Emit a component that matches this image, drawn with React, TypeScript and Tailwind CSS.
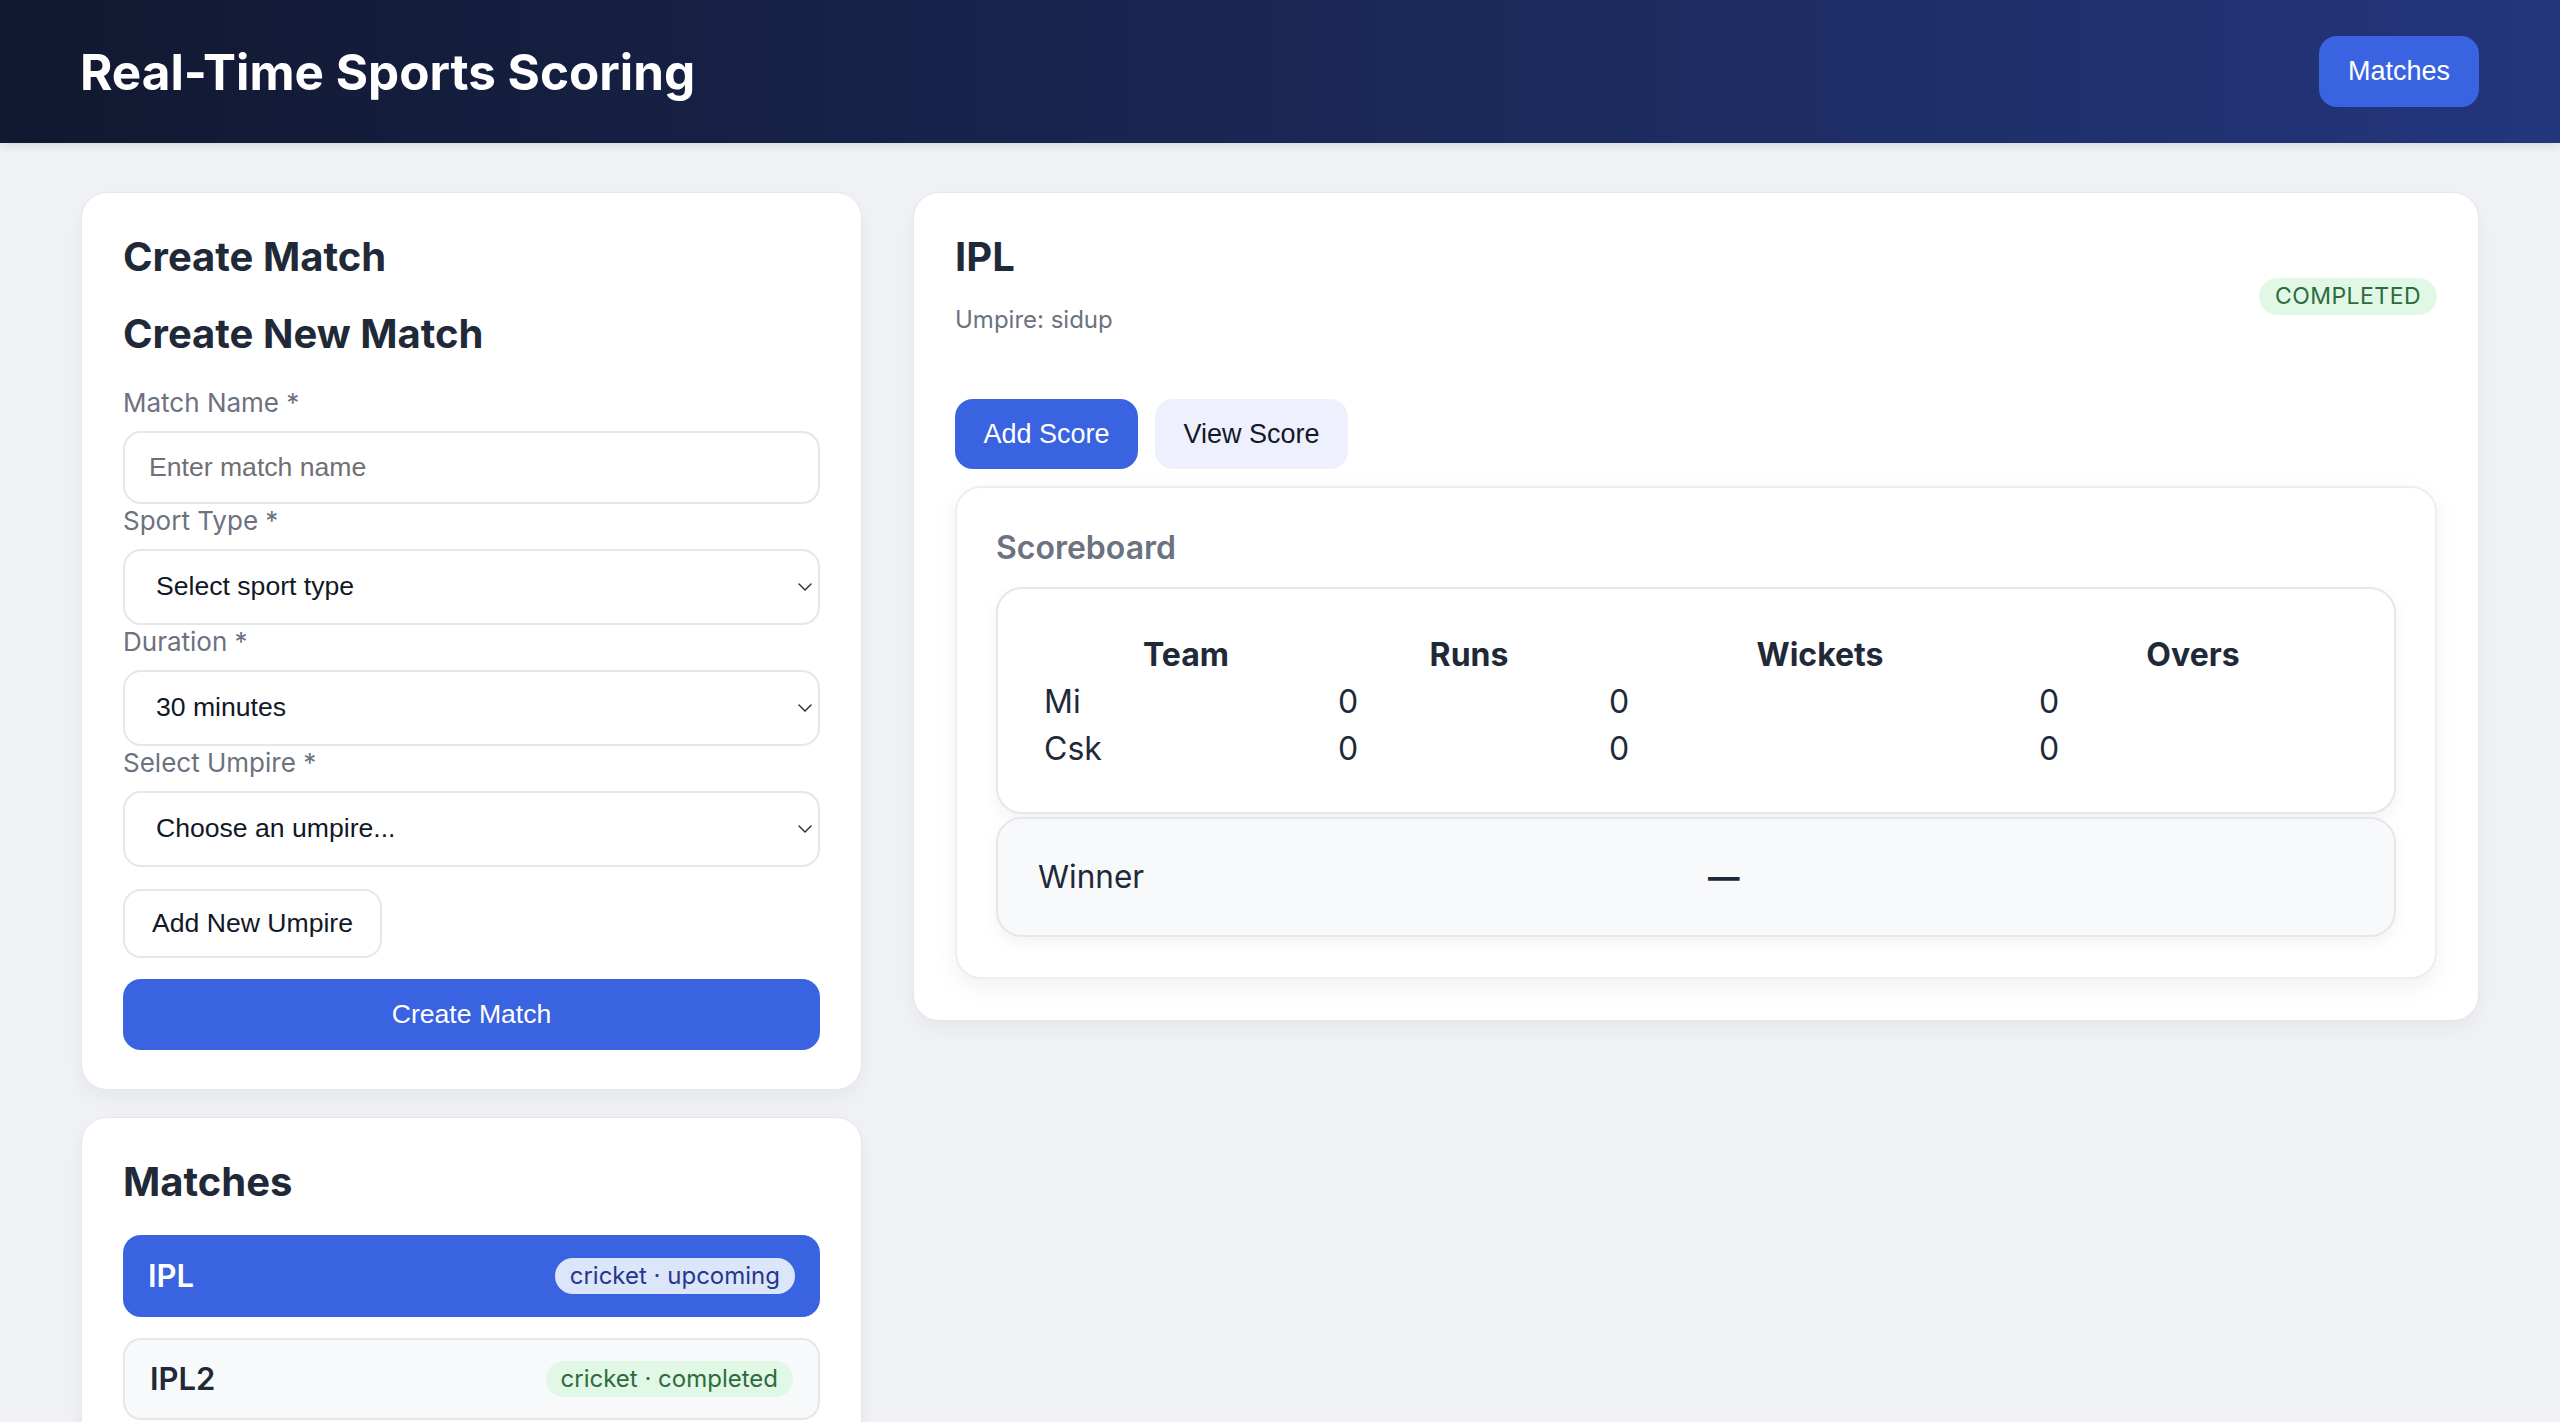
import { useState } from 'react';

const matches = [
  { name: 'IPL', sport: 'cricket', status: 'upcoming' },
  { name: 'IPL2', sport: 'cricket', status: 'completed' },
];

const scores = [
  { team: 'Mi', runs: 0, wickets: 0, overs: 0 },
  { team: 'Csk', runs: 0, wickets: 0, overs: 0 },
];

function Chevron() {
  return (
    <svg className="w-[14px] h-[10px] text-[#1f2937]" viewBox="0 0 14 10" fill="none" stroke="currentColor">
      <path d="M1 2l6 6 6-6" strokeWidth="1.4" strokeLinecap="round" strokeLinejoin="round" />
    </svg>
  );
}

function SelectBox({ value }: { value: string }) {
  return (
    <div className="mt-[13px] h-[76px] rounded-[18px] border-2 border-[#e5e7eb] bg-white flex items-center justify-between pl-[31px] pr-[6px] font-['Liberation_Sans',sans-serif] text-[26.6px] text-[#111827]">
      <span>{value}</span>
      <Chevron />
    </div>
  );
}

function Label({ children, first }: { children: string; first?: boolean }) {
  return (
    <label className={`${first ? '' : 'mt-[2px]'} text-[26px] leading-[30px] text-[#6b7280]`}>{children}</label>
  );
}

export default function App() {
  const [selected, setSelected] = useState(0);

  return (
    <div className="min-h-screen bg-[#f1f2f5] font-['Inter',sans-serif] text-[#1f2937]">
      <header className="h-[143px] bg-gradient-to-r from-[#111830] to-[#23367c] flex items-center justify-between pl-[80px] pr-[81px] shadow-[0_2px_10px_rgba(0,0,0,0.12)]">
        <h1 className="text-[49.4px] leading-[60px] font-bold text-white">Real-Time Sports Scoring</h1>
        <button className="h-[71px] w-[160px] rounded-[18px] bg-[#3a63e1] text-white text-[27px] font-['Liberation_Sans',sans-serif]">
          Matches
        </button>
      </header>

      <main className="flex items-start gap-[51px] px-[81px] pt-[49px]">
        {/* left column */}
        <div className="w-[781px] shrink-0 flex flex-col gap-[27px]">
          <section className="bg-white border border-[#e5e7eb] rounded-[26px] shadow-[0_8px_24px_rgba(17,24,39,0.05)] px-[41px] pt-[40px] pb-[39px]">
            <h2 className="text-[40px] leading-[48px] font-bold">Create Match</h2>
            <h3 className="mt-[29px] text-[40px] leading-[48px] font-bold">Create New Match</h3>
            <form className="mt-[30px] flex flex-col" onSubmit={(e) => e.preventDefault()}>
              <Label first>Match Name *</Label>
              <input
                placeholder="Enter match name"
                className="mt-[13px] h-[73px] rounded-[18px] border-2 border-[#e5e7eb] px-[24px] font-['Liberation_Sans',sans-serif] text-[26.6px] text-[#111827] placeholder:text-[#6f6f76] outline-none"
              />
              <Label>Sport Type *</Label>
              <SelectBox value="Select sport type" />
              <Label>Duration *</Label>
              <SelectBox value="30 minutes" />
              <Label>Select Umpire *</Label>
              <SelectBox value="Choose an umpire..." />
              <button
                type="button"
                className="mt-[22px] h-[69px] w-[259px] rounded-[18px] border-2 border-[#e5e7eb] bg-white text-[26.6px] text-[#111827] font-['Liberation_Sans',sans-serif]"
              >
                Add New Umpire
              </button>
              <button className="mt-[21px] h-[71px] w-full rounded-[18px] bg-[#3a63e1] text-white text-[26.6px] font-['Liberation_Sans',sans-serif]">
                Create Match
              </button>
            </form>
          </section>

          <section className="bg-white border border-[#e5e7eb] rounded-[26px] shadow-[0_8px_24px_rgba(17,24,39,0.05)] px-[41px] pt-[40px] pb-[40px]">
            <h2 className="text-[40px] leading-[48px] font-bold">Matches</h2>
            <div className="mt-[29px] flex flex-col gap-[21px]">
              {matches.map((m, i) => (
                <div
                  key={m.name}
                  onClick={() => setSelected(i)}
                  className={`h-[82px] rounded-[18px] flex items-center justify-between px-[25px] ${
                    selected === i ? 'bg-[#3a63e1] text-white' : 'bg-[#f8f9fb] border-2 border-[#e5e7eb] text-[#1f2937]'
                  }`}
                >
                  <span className="text-[31px] font-semibold">{m.name}</span>
                  <span
                    className={`h-[36px] rounded-full px-[15px] flex items-center text-[24px] ${
                      m.status === 'completed' ? 'bg-[#e1f8e6] text-[#2e6b3d]' : 'bg-[#dce6fb] text-[#27378c]'
                    }`}
                  >
                    {m.sport} · {m.status}
                  </span>
                </div>
              ))}
            </div>
          </section>
        </div>

        {/* right column */}
        <section className="flex-1 min-w-0 bg-white border border-[#e5e7eb] rounded-[26px] shadow-[0_8px_24px_rgba(17,24,39,0.05)] px-[41px] pt-[40px] pb-[41px]">
          <div className="flex items-start justify-between">
            <div>
              <h2 className="text-[40px] leading-[48px] font-bold">IPL</h2>
              <p className="mt-[22px] text-[24px] leading-[34px] text-[#6b7280]">Umpire: sidup</p>
            </div>
            <span className="mt-[45px] h-[37px] rounded-full bg-[#e1f8e6] text-[#2e6b3d] px-[16px] flex items-center text-[23px] tracking-[0.02em]">
              COMPLETED
            </span>
          </div>

          <div className="mt-[62px] flex gap-[17px]">
            <button className="h-[70px] w-[183px] rounded-[18px] bg-[#3a63e1] text-white text-[27px] font-['Liberation_Sans',sans-serif]">
              Add Score
            </button>
            <button className="h-[70px] w-[193px] rounded-[18px] bg-[#eef0fd] text-[#111827] text-[27px] font-['Liberation_Sans',sans-serif]">
              View Score
            </button>
          </div>

          <div className="mt-[17px] border-2 border-[#eceef1] rounded-[26px] shadow-[0_8px_24px_rgba(17,24,39,0.06)] px-[39px] pt-[38px] pb-[40px]">
            <h3 className="text-[32px] leading-[43px] font-semibold text-[#6b7280]">Scoreboard</h3>

            <div className="mt-[18px] border-2 border-[#e5e7eb] rounded-[26px] bg-white shadow-[0_6px_16px_rgba(17,24,39,0.05)] px-[46px] pt-[42px] pb-[40px] text-[32px] leading-[47px] overflow-hidden">
              <div className="grid grid-cols-[284px_282px_420px_326px] text-center font-bold">
                <div>Team</div>
                <div>Runs</div>
                <div>Wickets</div>
                <div>Overs</div>
              </div>
              {scores.map((s) => (
                <div key={s.team} className="grid grid-cols-[294px_271px_430px_1fr]">
                  <div>{s.team}</div>
                  <div>{s.runs}</div>
                  <div>{s.wickets}</div>
                  <div>{s.overs}</div>
                </div>
              ))}
            </div>

            <div className="mt-[3px] h-[120px] border-2 border-[#e5e7eb] rounded-[26px] bg-[#f8f9fb] shadow-[0_6px_16px_rgba(17,24,39,0.05)] px-[40px] grid grid-cols-2 items-center text-[31.5px]">
              <span>Winner</span>
              <span className="pl-[12px] font-bold">—</span>
            </div>
          </div>
        </section>
      </main>
    </div>
  );
}
